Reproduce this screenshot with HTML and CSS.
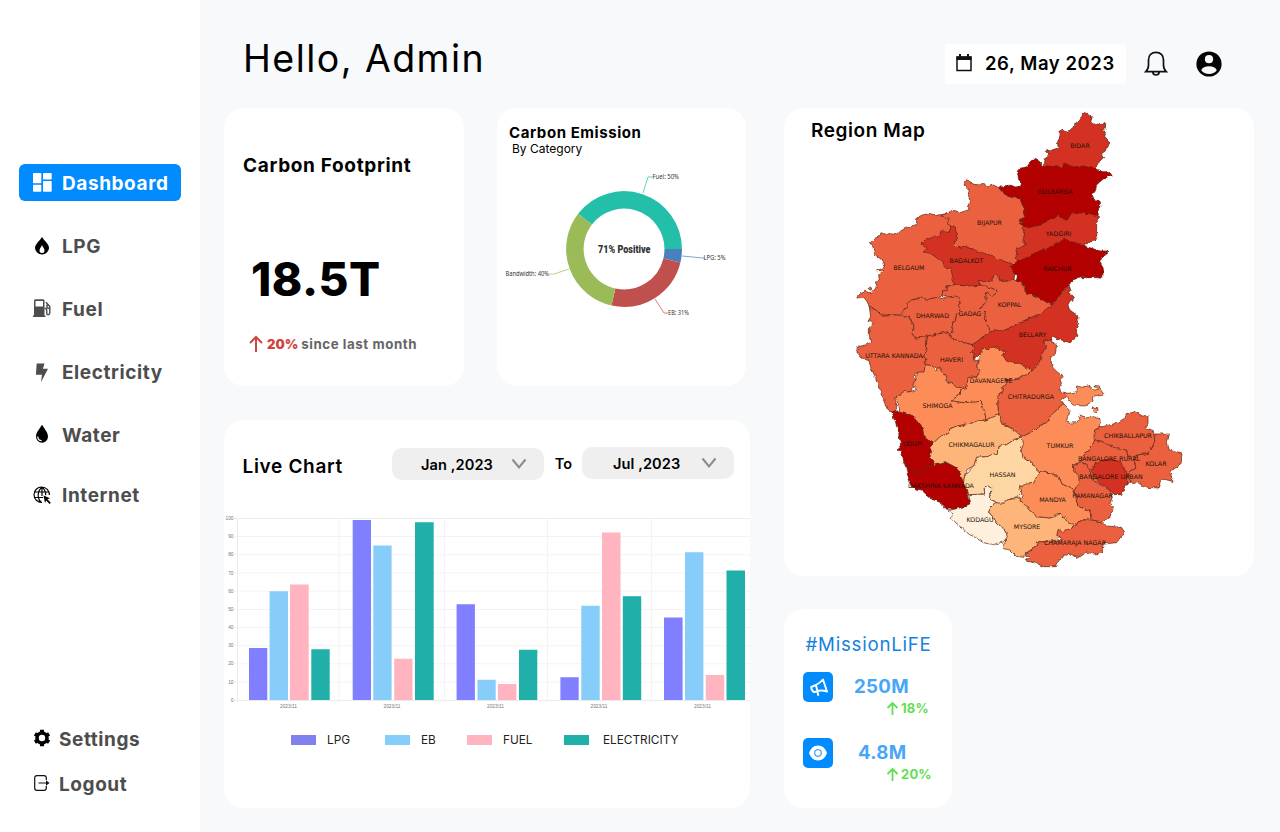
FILE: index.html
```html
<!DOCTYPE html>
<html lang="en">
<head>
<meta charset="utf-8">
<title>Carbon Dashboard</title>
<link rel="stylesheet" href="styles.css">
</head>
<body>
<div class="app">
  <aside class="sidebar">
    <nav class="nav">
      <a class="nav-item active"><svg class="icon" viewBox="0 0 20 20" fill="#fff"><rect x="1" y="0" width="8.3" height="10.2" rx=".7"/><rect x="1" y="11.8" width="8.3" height="6.9" rx=".7"/><rect x="11" y="0" width="8.7" height="6.4" rx=".7"/><rect x="11" y="8" width="8.700" height="10.700" rx=".7"/></svg><span>Dashboard</span></a>
      <a class="nav-item"><svg class="icon" viewBox="0 0 20 20"><path d="M10 1C8 4.500 3 8 3 12a7 6.500 0 0 0 14 0C17 8 12 4.500 10 1z"/><path d="M10 9C9.300 11 7.500 12.500 7.500 14.500a2.500 2.500 0 0 0 5 0C12.500 12.500 10.700 11 10 9z" fill="#fff"/></svg><span>LPG</span></a>
      <a class="nav-item"><svg class="icon" viewBox="0 0 20 20" fill="#4d4d4d"><path fill-rule="evenodd" d="M2 2A1.500 1.500 0 0 1 3.500 .3H11A1.500 1.500 0 0 1 12.500 2V16.500h1v1.500H1v-1.500h1zM3.500 2v5.500h7.500V2z"/><path d="M12.500 9.500h1q1.200 0 1.200 1.500V14q0 1.800 1.500 1.800T17.800 14V7.500L14 3.300M15 5.500v3.200l2.500 1" fill="none" stroke="#4d4d4d" stroke-width="1.400"/></svg><span>Fuel</span></a>
      <a class="nav-item"><svg class="icon" viewBox="0 0 20 20" fill="#4d4d4d"><path d="M4.700 1.500h7.800l-1.600 5.200H16L9 20.200l1-7.400H3.900z"/></svg><span>Electricity</span></a>
      <a class="nav-item"><svg class="icon" viewBox="0 0 20 20"><path d="M10 .5C8.500 4 4 8 4 12.500a6 6.200 0 0 0 12 0C16 8 11.500 4 10 .5z" transform="translate(0 -1)"/><path d="M5.700 11.500q.2 4 4 4.200" fill="none" stroke="#fff" stroke-width="1.200"/></svg><span>Water</span></a>
      <a class="nav-item last"><svg class="icon" viewBox="0 0 20 20" fill="none" stroke="#000" stroke-width="1.200"><path d="M17.400 10A7.700 7.700 0 1 0 10 17.400M10 2.200C5 6 5 14 9.500 17.400M10 2.200q3.700 2.500 3.700 8M10 2v9M3 7h14M2.500 12.500H11"/><path d="M11.500 10.500l6.500 2.700-2.500 1 3.300 3.600-1.300 1.200-3.300-3.500-1.200 2.600z" fill="#000" stroke="none"/></svg><span>Internet</span></a>
    </nav>
    <nav class="nav-foot">
      <a><svg class="icon" viewBox="0 0 20 20"><g transform="translate(0 -1)"><circle cx="10" cy="10" r="5" fill="none" stroke="#000" stroke-width="3.600"/><path d="M10 1.800v3M10 15.200v3M2.900 5.900l2.500 1.500M14.600 12.600l2.500 1.500M17.100 5.900l-2.500 1.500M5.400 12.600l-2.500 1.500" stroke="#000" stroke-width="4" stroke-linecap="butt"/></g></svg><span>Settings</span></a>
      <a><svg class="icon" viewBox="0 0 20 20" fill="none" stroke="#111" stroke-width="1.200"><g transform="translate(0 -1)"><path d="M14.300 7V5q0-2.300-2.300-2.300H5Q2.700 2.700 2.700 5v10q0 2.300 2.300 2.300h7q2.300 0 2.300-2.300v-2M6.500 10h9.500"/><path d="M14 7.300L17.500 10 14 12.700z" fill="#111" stroke="none"/></g></svg><span>Logout</span></a>
    </nav>
  </aside>

  <main class="main">
    <header class="header">
      <h1>Hello, Admin</h1>
      <div class="date"><svg width="18" height="20" viewBox="0 0 18 20"><path d="M2 4h14v13.500H2z" fill="none" stroke="#111" stroke-width="1.500"/><path d="M1.500 3.500h15V7h-15zM4 1h2v3H4zM12 1h2v3h-2z" fill="#111"/></svg><span>26, May 2023</span></div>
      <svg class="bell" viewBox="0 0 24 28" fill="none" stroke="#111" stroke-width="1.700"><path d="M12 2.300c-4.500 0-7.500 3.200-7.500 7.700v5c0 3-.8 4.800-2.700 6.600h20.400c-1.900-1.800-2.700-3.600-2.700-6.600v-5c0-4.500-3-7.700-7.500-7.700z"/><path d="M8.800 21.800a3.200 3.200 0 0 0 6.400 0"/></svg>
      <svg class="user" viewBox="0 0 26 26"><circle cx="13" cy="13" r="12.600" fill="#050505"/><circle cx="13" cy="8.200" r="4.100" fill="#f7f9fb"/><path d="M5.200 19.200Q7 15.300 13 15.300t7.800 3.900Q18 23 13 23t-7.800-3.800z" fill="#f7f9fb"/></svg>
    </header>

    <div class="board">
      <div class="left">
        <div class="top-row">
          <section class="card footprint">
            <h2>Carbon Footprint</h2>
            <div class="value">18.5T</div>
            <div class="trend"><svg width="14" height="18" viewBox="0 0 14 18" fill="none" stroke="#d0453f" stroke-width="2"><path d="M7 17V2M1 8l6-6 6 6"/></svg><b>20%</b><span>since last month</span></div>
          </section>
          <section class="card emission">
            <h2>Carbon Emission</h2>
            <p>By Category</p>
            <svg class="donut" viewBox="497 160 249 170" width="249" height="170">
              <g fill="none" stroke-width="17.500">
                <path stroke="#24bfa9" d="M585 219.100A49.200 49.200 0 0 1 673.200 249"/>
                <path stroke="#4a80bd" d="M673.200 249A49.200 49.200 0 0 1 671.900 260.500"/>
                <path stroke="#c0504d" d="M671.900 260.500A49.200 49.200 0 0 1 613.400 297"/>
                <path stroke="#9bbb59" d="M613.400 297A49.200 49.200 0 0 1 585 219.100"/>
              </g>
              <g fill="none" stroke-width=".7">
                <path stroke="#24bfa9" d="M643 193l5-16h5"/><path stroke="#4a80bd" d="M682 256l21 2h2"/>
                <path stroke="#c0504d" d="M655 299l9 14h4"/><path stroke="#9bbb59" d="M569 269l-15 5h-5"/>
              </g>
              <g class="donut-labels">
                <text x="652.500" y="178.800" textLength="26.500" lengthAdjust="spacingAndGlyphs">Fuel: 50%</text><text x="703.500" y="259.600" textLength="22" lengthAdjust="spacingAndGlyphs">LPG: 5%</text>
                <text x="668" y="314.600" textLength="21" lengthAdjust="spacingAndGlyphs">EB: 31%</text><text x="505.500" y="275.700" textLength="43.500" lengthAdjust="spacingAndGlyphs">Bandwidth: 40%</text>
              </g>
              <text class="positive" x="598" y="253.200" textLength="52.500" lengthAdjust="spacingAndGlyphs">71% Positive</text>
            </svg>
          </section>
        </div>

        <section class="card live">
          <div class="live-head">
            <h2>Live Chart</h2>
            <div class="select from"><span>Jan ,2023</span><svg width="16" height="12" viewBox="0 0 16 12"><path d="M1.500 1.500L8 9.500l6.500-8"/></svg></div>
            <span class="to">To</span>
            <div class="select until"><span>Jul ,2023</span><svg width="16" height="12" viewBox="0 0 16 12"><path d="M1.500 1.500L8 9.500l6.500-8"/></svg></div>
          </div>
          <svg class="bars" viewBox="224 510 526 205" width="526" height="205">
            <path stroke="#ececec" stroke-width="1" d="M234 518.500h516M234 700.500h516M237.500 518v184"/>
            <path stroke="#f3f3f3" stroke-width="1" d="M234 536.500h516M234 554.800h516M234 573h516M234 591.200h516M234 609.500h516M234 627.500h516M234 645.700h516M234 663.800h516M234 682h516M339 518v184M444.500 518v184M547.500 518v184M651.500 518v184"/>
            <g fill="#807fff"><path d="M249 648h18.300v52H249zM352.700 520H371v180h-18.300zM456.600 604.300h18.300V700h-18.300zM560.400 677.300h18.300V700h-18.300zM664 617.500h18.600V700H664z"/></g>
            <g fill="#87cdf9"><path d="M269.600 591.300H288V700h-18.400zM373.300 545.600h18.300V700h-18.300zM477.500 679.700h18.200V700h-18.200zM581.300 605.700h18.400V700h-18.400zM685 552.200h18.400V700H685z"/></g>
            <g fill="#ffb4c0"><path d="M290 584.600h18.700V700H290zM394.200 658.700h18.300V700h-18.300zM498 684h18.400v16H498zM602 532.600h18.500V700H602zM705.800 675h18.400v25h-18.400z"/></g>
            <g fill="#20b0a9"><path d="M311.300 649.300h18.400V700h-18.400zM415 522.200h18.700V700H415zM519 649.800h18.300V700H519zM622.800 596.300h18.400V700h-18.400zM726.500 570.600H745V700h-18.500z"/></g>
            <g class="ticks" text-anchor="end"><text x="233.500" y="520.100">100</text><text x="233.500" y="538.200">90</text><text x="233.500" y="556.400">80</text><text x="233.500" y="574.600">70</text><text x="233.500" y="592.800">60</text><text x="233.500" y="611">50</text><text x="233.500" y="629">40</text><text x="233.500" y="647.200">30</text><text x="233.500" y="665.300">20</text><text x="233.500" y="683.500">10</text><text x="233.500" y="701.700">0</text></g>
            <g class="ticks" text-anchor="middle"><text x="288.500" y="708">2023/11</text><text x="392" y="708">2023/11</text><text x="495.500" y="708">2023/11</text><text x="599" y="708">2023/11</text><text x="702.500" y="708">2023/11</text></g>
          </svg>
          <div class="legend">
            <span class="key k1"><i></i>LPG</span><span class="key k2"><i></i>EB</span><span class="key k3"><i></i>FUEL</span><span class="key k4"><i></i>ELECTRICITY</span>
          </div>
        </section>
      </div>

      <div class="right">
        <section class="card region">
          <h2>Region Map</h2>
          <svg class="map" viewBox="784 108 470 468" width="470" height="468">
            <defs><filter id="rough" filterUnits="userSpaceOnUse" x="784" y="100" width="470" height="476" color-interpolation-filters="sRGB"><feTurbulence type="fractalNoise" baseFrequency=".2" numOctaves="2" seed="4"/><feDisplacementMap in="SourceGraphic" scale="4" xChannelSelector="R" yChannelSelector="G"/></filter></defs>
            <g class="districts" filter="url(#rough)">
              <g transform="translate(840 220) scale(.33333)">
                <path class="c4" d="M88 66L100 60 116 50 126 38 140 44 152 38 170 42 180 32 200 24 228 14 232-8 250-16 270-20 290-14 310-18 328-24 350-14 352 34 348 90 360 190 342 194 320 200 324 210 308 212 306 230 290 232 264 238 240 234 218 240 200 250 202 262 188 272 180 286 150 284 124 286 108 270 88 262 82 246 72 232 50 234 60 222 76 214 95 220 104 208 112 202 106 186 118 180 116 164 130 152 108 152 134 140 132 126 118 114 100 104 106 92 98 80z"/>
                <path class="c4" d="M84 204l8-3 4 6-6 4z"/>
                <path class="c4" d="M88 262L108 270 124 286 150 284 180 286 204 290 216 306 226 324 214 336 224 354 260 348 256 372 262 392 250 410 258 416 254 460 226 460 222 470 232 490 222 500 210 516 194 518 170 530 164 540 172 560 160 578 144 572 134 550 126 520 112 492 104 466 90 440 88 420 66 414 50 396 56 388 50 380 80 374 92 364 88 346 88 322 100 310 84 304 92 290z"/>
                <path class="c4" d="M188 272L202 262 200 250 218 240 240 234 264 238 290 232 310 236 330 230 350 228 362 240 356 256 360 270 350 282 346 300 334 310 338 330 332 350 320 336 296 342 270 348 250 352 224 354 214 336 226 324 216 306 204 290 186 284z"/>
                <path class="c4" d="M306 230L308 212 324 210 320 200 342 194 380 198 422 186 440 200 464 206 470 218 456 230 436 216 438 240 430 256 422 266 436 280 434 296 444 318 452 334 440 344 424 354 410 366 396 374 380 370 362 366 340 356 332 350 338 330 334 310 346 300 350 282 360 270 356 256 362 240 350 228 330 230z"/>
                <path class="c4" d="M260 348L296 342 320 336 340 356 362 366 396 374 404 388 394 398 404 404 398 416 414 424 410 440 420 456 412 470 390 472 382 490 378 506 358 502 334 492 320 480 320 466 304 460 296 446 270 436 254 432 258 416 250 410 262 392 256 372z"/>
                <path class="c5" d="M243 70L260 58 285 50 303 44 308 30 328 36 332 18 346 14 352 34 348 70 352 82 372 76 400 84 430 94 460 106 490 120 520 132 525 160 522 180 500 184 480 184 475 166 458 168 456 186 430 182 414 182 422 196 380 198 342 194 338 170 332 144 310 140 306 124 290 114 272 100 252 96 262 84z"/>
                <path class="c4" d="M414 182L430 182 456 186 458 168 475 166 480 184 500 184 522 180 545 188 552 200 556 216 580 226 604 234 620 246 638 256 620 266 600 282 570 294 548 304 520 318 500 328 484 334 464 330 452 334 444 318 434 296 436 280 422 266 430 256 440 240 436 216 456 230 470 218 464 206 440 200 424 196z"/>
              </g>
              <g transform="translate(850 340) scale(.33333)">
                <path class="c3" d="M134 172L150 168 158 154 178 156 200 148 188 136 196 122 204 96 222 96 226 74 240 76 258 90 268 82 276 98 290 110 292 126 320 140 350 146 330 150 328 164 304 182 340 188 392 184 404 214 408 240 380 244 360 250 330 256 300 266 296 280 270 290 250 310 238 302 220 284 216 260 200 240 180 224 150 214 144 190z"/>
                <path class="c4" d="M500 60L540 20 590 20 582 10 586-4 604-4 606 10 620 12 616 44 602 50 606 80 622 96 640 110 630 118 634 130 628 142 634 160 654 160 650 170 634 180 640 190 624 206 610 220 600 230 596 246 580 252 560 262 546 276 520 290 500 280 484 262 460 254 450 232 444 200 442 180 448 160 460 152 458 140 468 134 466 118 490 120 510 116z"/>
                <path class="c3" d="M350 146L354 112 382 112 390 90 380 80 390 50 396 26 420 20 448 10 480 30 500 50 528 76 548 92 530 102 510 116 490 120 466 118 468 134 458 140 460 152 448 160 442 180 444 200 446 224 430 232 408 240 404 214 392 184 340 188 304 182 328 164 330 150z"/>
                <path class="c2" d="M250 310L270 290 296 280 300 266 330 256 360 250 380 244 408 240 446 224 460 254 484 262 500 280 516 290 494 298 470 314 444 320 442 340 412 350 380 352 372 376 350 390 344 406 340 430 330 400 320 384 290 368 250 376 252 364 238 350 248 334 240 322z"/>
                <path class="c6" d="M124 216L144 212 150 214 180 224 200 240 216 260 220 284 238 302 250 310 240 322 248 334 238 350 252 364 250 376 230 386 208 402 190 392 178 378 168 384 160 360 154 334 144 330 152 316 146 280 136 244z"/>
                <path class="c0" d="M296 512L340 500 362 490 356 464 404 462 402 442 412 436 426 446 418 456 424 480 434 488 424 500 416 516 428 530 440 548 462 568 474 590 462 604 430 614 400 608 372 590 350 580 340 566 318 552 304 536 308 522z"/>
                <path class="c6" d="M168 384L178 378 190 392 208 402 230 386 250 376 290 368 320 384 330 400 340 430 356 444 352 460 362 490 340 500 320 506 290 508 276 490 262 484 246 478 230 464 214 450 196 446 184 440 174 410z"/>
                <path class="c1" d="M340 430L344 406 372 376 380 352 412 350 442 340 444 320 470 314 494 298 520 290 524 310 512 330 518 352 540 364 554 382 572 394 560 410 556 430 540 440 510 434 512 460 500 474 480 476 460 496 440 488 424 480 418 456 426 446 412 436 402 442 404 462 356 464 352 448z"/>
              </g>
              <g transform="translate(1000 340) scale(.33333)">
                <path class="c3" d="M66 290L96 276 110 262 130 252 146 246 150 230 174 206 190 190 206 206 208 222 200 238 206 250 230 248 240 234 236 226 250 226 256 234 280 230 300 236 300 262 284 270 282 290 284 306 270 330 256 340 246 352 240 366 220 374 222 390 236 404 238 420 230 440 222 452 206 442 186 432 176 410 150 398 120 398 100 376 90 364 66 350 62 330 70 310z"/>
                <path class="c3" d="M190 156L204 160 228 156 230 138 248 142 270 136 284 150 296 152 282 136 298 138 312 160 300 168 286 166 276 184 256 198 224 196 206 180 200 166zM276 204l18 2-2 14-12-6z"/>
                <path class="c2" d="M10 490L20 480 60 474 70 490 90 512 112 530 150 534 184 520 200 544 230 552 210 566 190 580 170 600 150 604 110 606 108 620 76 640 74 652 50 650 30 630 10 626 12 604 22 590 14 568-8 550-22 530-34 516-26 500-14 488z"/>
                <path class="c3" d="M120 396L150 398 176 410 186 432 206 442 222 452 228 470 230 490 240 502 268 510 276 536 240 540 230 552 214 552 200 544 198 530 188 534 184 520 170 522 150 534 112 530 90 512 70 490 60 480 66 466 58 440 80 432 100 430 110 410z"/>
                <path class="c4" d="M76 642L108 620 110 606 150 604 186 600 180 590 170 586 176 568 184 576 210 566 230 552 240 540 276 540 310 548 320 558 364 562 374 576 360 594 350 608 310 612 304 640 280 642 260 636 230 652 216 642 190 646 172 668 170 680 130 680 110 670 76 662 88 652z"/>
                <path class="c4" d="M220 374L240 366 256 372 270 390 274 410 290 430 310 440 330 450 336 470 330 490 340 504 330 530 308 546 276 540 268 510 240 502 230 490 228 470 222 452 236 430 238 412 222 390z"/>
                <path class="c4" d="M240 364L256 340 270 330 284 300 310 306 350 326 380 330 384 350 400 350 416 344 402 360 408 384 386 400 390 426 376 436 340 440 300 432 284 424 274 410 270 390 256 372z"/>
                <path class="c4" d="M464 282L508 282 502 310 508 330 546 342 544 370 520 386 510 400 522 424 490 418 480 430 474 444 440 442 416 430 390 426 386 400 408 384 402 360 416 344 446 340 456 324 464 300z"/>
                <path class="c4" d="M284 270L300 262 330 254 356 246 372 236 382 220 396 218 410 212 416 222 430 228 444 226 444 250 436 262 460 272 464 300 456 324 446 340 416 344 400 350 384 350 380 330 350 326 310 306 284 298z"/>
                <path class="c5" d="M284 372L300 362 320 358 360 364 374 390 382 410 378 440 364 464 344 464 320 444 300 432 284 412 276 394z"/>
              </g>
              <g transform="translate(940 105) scale(.33333)">
                <path class="c5" d="M308 182L316 170 312 160 326 150 322 140 316 138 320 132 328 138 345 132 355 128 352 112 358 100 360 88 356 80 366 74 376 80 390 76 402 68 405 56 418 48 425 36 430 22 442 26 450 34 456 36 452 48 468 60 482 55 497 56 496 70 488 76 498 90 496 100 510 114 500 126 496 138 484 146 494 158 484 164 478 172 470 178 468 200 400 200 340 200z"/>
                <path class="c5" d="M250 350L340 320 400 310 474 316 474 332 476 348 470 356 470 372 474 390 466 408 450 412 432 414 436 424 380 450 234 468 224 456 232 448 226 436 240 428 256 420 248 408 254 390 250 376z"/>
                <path class="c4" d="M0 332L20 326 40 316 62 322 88 314 84 300 92 290 82 270 88 254 72 240 80 224 90 232 102 238 120 240 130 232 140 246 160 240 176 248 190 264 205 274 222 278 240 280 246 296 254 312 250 324 258 336 238 344 248 350 240 356 250 362 250 376 254 390 248 408 256 420 240 428 226 436 232 448 224 456 234 468 222 476 206 474 180 464 150 450 120 440 90 430 70 424 50 428 40 418 50 400 48 380 46 364 30 362 22 356 28 340 12 336z"/>
                <path class="c6" d="M232 198L240 190 262 184 272 170 278 162 290 166 300 174 308 182 340 184 366 188 372 174 400 186 430 184 470 192 490 200 506 200 520 210 506 214 490 222 478 232 470 240 466 258 456 270 460 282 474 286 480 300 474 316 474 332 450 326 420 324 395 324 386 338 380 346 362 338 350 326 346 338 322 346 302 360 288 362 266 368 250 362 240 356 248 350 238 344 258 336 250 324 254 312 246 296 240 280 222 278 205 274 190 264 176 248 182 242 200 246 210 240 222 246 242 244 244 232 236 224z"/>
                <path class="c5" d="M338 600L360 570 388 541 392 556 386 566 404 580 390 588 384 599 388 613 412 631 416 655 406 675 414 693 390 713 364 705 336 693 332 707 316 701 312 721 320 729 308 739 304 755 296 775 276 797 256 785 240 775 220 775 200 769 188 751 200 739 178 737 174 725 150 731 124 731 120 747 110 757 98 761 104 749 94 743 104 733 96 719 110 711 124 699 140 689 152 679 164 675 184 679 200 673 220 663 248 649 270 639 300 627 320 611z"/>
                <path class="c6" d="M234 468L260 458 290 440 320 432 340 420 366 410 372 400 380 406 410 414 436 424 462 432 480 438 498 438 504 444 494 452 484 460 482 476 490 490 488 520 470 518 440 518 420 518 400 524 386 540 372 556 352 580 338 600 320 592 300 580 290 574 268 566 256 560 254 544 244 532 228 528 232 512 222 500 212 484z"/>
              </g>
            </g>
            <g class="labels">
              <text x="1080" y="147.500">BIDAR</text><text x="1055" y="193.500">GULBARGA</text><text x="989.500" y="225">BIJAPUR</text><text x="1058.500" y="235.500">YADGIRI</text><text x="966.500" y="263">BAGALKOT</text><text x="1057.500" y="271">RAICHUR</text><text x="909" y="270">BELGAUM</text><text x="1009.500" y="306.500">KOPPAL</text><text x="932.500" y="318">DHARWAD</text><text x="970" y="315.500">GADAG</text><text x="1032.500" y="336.500">BELLARY</text><text x="894" y="358">UTTARA KANNADA</text><text x="951.500" y="361.500">HAVERI</text><text x="991" y="383">DAVANAGERE</text><text x="1031" y="399">CHITRADURGA</text><text x="937.500" y="407.500">SHIMOGA</text><text x="912.500" y="446">UDUPI</text><text x="971.500" y="446.500">CHIKMAGALUR</text><text x="1060" y="448">TUMKUR</text><text x="1128" y="437.500">CHIKBALLAPUR</text><text x="1109" y="461">BANGALORE RURAL</text><text x="1156" y="466">KOLAR</text><text x="1002.500" y="477">HASSAN</text><text x="1111" y="479">BANGALORE URBAN</text><text x="941" y="487.500">DAKSHINA KANNADA</text><text x="1092.500" y="497.500">RAMANAGAR</text><text x="1052.500" y="502">MANDYA</text><text x="980" y="521.500">KODAGU</text><text x="1027" y="529">MYSORE</text><text x="1075" y="545">CHAMARAJA NAGAR</text>
            </g>
          </svg>
        </section>

        <section class="card mission">
          <h2>#MissionLiFE</h2>
          <div class="stat">
            <span class="badge"><svg viewBox="0 0 30 30" fill="none" stroke="#fff" stroke-width="1.900" stroke-linejoin="round" stroke-linecap="round"><path d="M20 7.500L24 19.500Q18 17.500 12.500 19.800L10.500 20q-2.500-2.300-2.300-5l4.800-2Q17.500 10.500 20 7.500zM13 13.500l1.500 5.700M14.500 20l.7 3"/></svg></span>
            <div><strong>250M</strong><em><svg width="13" height="15" viewBox="0 0 13 15"><path d="M6.500 14V1.800M1.500 7l5-5 5 5"/></svg>18%</em></div>
          </div>
          <div class="stat second">
            <span class="badge"><svg viewBox="0 0 30 30"><path d="M6 15C7.500 10.500 10.500 7.500 15 7.500S22.500 10.500 24 15C22.500 19.500 19.500 22.500 15 22.500S7.500 19.500 6 15z" fill="#fff"/><circle cx="15" cy="15" r="3.300" fill="none" stroke="#4aa8f5" stroke-width="1.300"/></svg></span>
            <div><strong>4.8M</strong><em><svg width="13" height="15" viewBox="0 0 13 15"><path d="M6.500 14V1.800M1.500 7l5-5 5 5"/></svg>20%</em></div>
          </div>
        </section>
      </div>
    </div>
  </main>
</div>
</body>
</html>
```
FILE: styles.css
```css
* { box-sizing: border-box; margin: 0; padding: 0; }
body { width: 1280px; height: 832px; overflow: hidden; font-family: Inter, "Noto Sans", sans-serif; color: #000; background: #f7f9fb; }
.app { display: flex; height: 832px; }
h1, h2 { white-space: nowrap; }

.sidebar { width: 200px; background: #fff; padding: 164px 19px 0; display: flex; flex-direction: column; }
.nav { display: flex; flex-direction: column; gap: 26px; }
.nav-item, .nav-foot a { display: flex; align-items: center; color: #4d4d4d; font-size: 19px; font-weight: 700; letter-spacing: .58px; }
.nav-item span, .nav-foot span { padding-top: 2px; }
.nav-item { height: 37px; padding-left: 13px; gap: 10px; border-radius: 6px; }
.nav-item.last { margin-top: -3px; }
.nav-item.active { background: #008cff; color: #fff; }
.icon { width: 20px; height: 20px; flex: none; }
.nav-foot { margin-top: 207px; display: flex; flex-direction: column; gap: 8px; padding-left: 13px; }
.nav-foot a { height: 37px; gap: 7px; }

.main { flex: 1; padding-left: 24px; }
.header { height: 108px; display: flex; padding: 0 57px 0 19px; }
h1 { font-size: 37.5px; font-weight: 400; line-height: 46px; margin-top: 36px; letter-spacing: 1.45px; width: 702px; }
.date { width: 181px; height: 40px; margin-top: 44px; flex: none; background: #fff; border-radius: 4px; display: flex; align-items: center; padding-left: 10px; gap: 12px; font-size: 18.5px; line-height: 22px; font-weight: 600; letter-spacing: .57px; white-space: nowrap; padding-bottom: 2px; }
.bell { width: 24px; height: 28px; margin: 50px 0 0 18px; flex: none; }
.user { width: 26px; height: 26px; margin: 51px 0 0 28px; flex: none; }

.board { display: flex; gap: 34px; }
.card { background: #fff; border-radius: 20px; }
.left { width: 526px; display: flex; flex-direction: column; gap: 34px; }
.top-row { display: flex; gap: 33px; }

.footprint { width: 240px; height: 278px; padding: 46px 0 0 19px; }
.footprint h2 { font-size: 19px; line-height: 24px; font-weight: 700; letter-spacing: .67px; }
.value { font-size: 46px; line-height: 56px; font-weight: 800; letter-spacing: .5px; margin: 73px 0 0 8px; }
.trend { display: flex; align-items: center; margin: 27px 0 0 6px; height: 20px; font-size: 13.3px; font-weight: 700; letter-spacing: .57px; color: #666; white-space: nowrap; }
.trend b { color: #d0453f; margin: 0 3px 0 4px; letter-spacing: 0; font-size: 13px; }

.emission { width: 249px; height: 278px; padding-top: 16px; }
.emission h2 { font-size: 15px; line-height: 18px; font-weight: 700; letter-spacing: .57px; padding-left: 12px; }
.emission p { font-size: 12px; line-height: 14px; padding-left: 15px; }
.donut { display: block; margin-top: 4px; }
.donut-labels { font: 6.3px "Noto Sans", sans-serif; fill: #333; }
.positive { font: 900 11.5px Roboto, sans-serif; fill: #333; }

.live { height: 388px; padding-top: 27px; }
.live-head { display: flex; height: 63px; padding-left: 18.5px; }
.live-head h2 { width: 149.5px; font-size: 19px; line-height: 24px; font-weight: 600; letter-spacing: .68px; margin-top: 8px; }
.select { width: 152px; height: 32px; border-radius: 10px; background: #efefef; display: flex; align-items: center; font-size: 14.6px; font-weight: 600; letter-spacing: .08px; white-space: nowrap; }
.select span { width: 90px; padding-top: 2px; }
.select svg { fill: none; stroke: #8b8b8b; stroke-width: 2; }
.from { margin-top: 1px; padding-left: 29px; }
.until { padding-left: 31px; }
.until span { width: 88px; }
.to { width: 38px; padding-left: 1px; text-align: center; line-height: 34px; font-size: 14.5px; font-weight: 600; }
.bars { display: block; }
.ticks { font: 4.8px "Liberation Sans", sans-serif; fill: #777; }
.legend { display: flex; padding: 17px 0 0 67px; font-size: 11.8px; line-height: 16px; color: #222; }
.key { display: flex; align-items: center; white-space: nowrap; }
.key i { width: 25px; height: 10px; margin-right: 11px; }
.k1 { width: 94px; } .k1 i { background: #8080ef; }
.k2 { width: 82px; } .k2 i { background: #87cdf9; }
.k3 { width: 97px; } .k3 i { background: #ffb4c0; }
.k4 i { background: #20b0a9; margin-right: 14px; }

.right { width: 470px; display: flex; flex-direction: column; gap: 33px; }
.region { height: 468px; display: grid; }
.region > * { grid-area: 1 / 1; }
.region h2 { font-size: 19px; line-height: 24px; font-weight: 600; letter-spacing: .58px; padding: 11px 0 0 27px; }
.map { display: block; }
.districts path { stroke: #5a2412; stroke-width: 2.1; stroke-linejoin: round; }
.c0 { fill: #fef0dc; } .c1 { fill: #fdd6a3; } .c2 { fill: #fdb57a; } .c3 { fill: #fc8d59; }
.c4 { fill: #eb603f; } .c5 { fill: #d33122; } .c6 { fill: #b30000; }
.labels { font: 6.3px "DejaVu Sans", sans-serif; fill: #241008; text-anchor: middle; }

.mission { width: 168px; height: 199px; padding: 23px 0 0 19px; }
.mission h2 { font-size: 18.7px; line-height: 26px; font-weight: 400; letter-spacing: .75px; color: #1583dc; padding-left: 2.5px; }
.stat { display: flex; height: 66px; padding-top: 14px; }
.stat div { width: 130px; }
.badge { width: 30px; height: 30px; background: #008cff; border-radius: 5px; flex: none; }
.badge svg { display: block; width: 30px; height: 30px; }
.stat strong { display: block; font-size: 18.7px; line-height: 28px; padding-top: 1px; height: 28px; letter-spacing: .3px; margin-left: 21px; color: #46a6f8; }
.stat em { display: flex; align-items: center; gap: 2px; margin-left: 53px; font-style: normal; font-weight: 700; font-size: 13px; line-height: 16px; letter-spacing: .2px; color: #5fe052; }
.stat em svg { fill: none; stroke: #5fe052; stroke-width: 1.8; }
.second strong { margin-left: 25px; }
```
